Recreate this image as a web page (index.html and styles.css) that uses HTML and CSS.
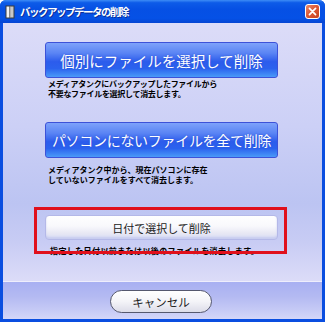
FILE: index.html
```html
<!DOCTYPE html>
<html lang="ja">
<head>
<meta charset="utf-8">
<link rel="stylesheet" href="styles.css">
</head>
<body>
<div class="window">
  <div class="titlebar">
    <svg class="ticon" width="10" height="14" viewBox="0 0 10 14">
      <rect x="0.5" y="0.5" width="9" height="13" fill="#3a3a3a"/>
      <rect x="1.5" y="1.5" width="3" height="11" fill="#f4f4f4"/>
      <rect x="5" y="1.5" width="3.5" height="11" fill="#c8c8c8"/>
      <rect x="4.5" y="1.5" width="0.8" height="11" fill="#777"/>
    </svg>
    <span class="title">バックアップデータの削除</span>
    <div class="close">
      <svg width="15" height="15" viewBox="0 0 15 15">
        <path d="M4 4 L11 11 M11 4 L4 11" stroke="#fff" stroke-width="2" stroke-linecap="round"/>
      </svg>
    </div>
  </div>
  <div class="client">
    <div class="main">
      <div class="bluebtn b1">個別にファイルを選択して削除</div>
      <p class="desc d1">メディアタンクにバックアップしたファイルから<br>不要なファイルを選択して消去します。</p>
      <div class="bluebtn b2">パソコンにないファイルを全て削除</div>
      <p class="desc d2">メディアタンク中から、現在パソコンに存在<br>していないファイルをすべて消去します。</p>
      <div class="third">
        <div class="whitebtn">日付で選択して削除</div>
        <p class="desc d3">指定した日付以前または以後のファイルを消去します。</p>
        <div class="highlight"></div>
      </div>
    </div>
    <div class="footer">
      <div class="cancel">キャンセル</div>
    </div>
  </div>
</div>
</body>
</html>
```

FILE: styles.css
```css
* { box-sizing: border-box; }
html, body { margin: 0; padding: 0; }
body {
  width: 325px;
  height: 322px;
  font-family: "Noto Sans CJK JP", "Noto Sans", sans-serif;
  background: #fff;
}
.window {
  width: 325px;
  height: 322px;
  display: flex;
  flex-direction: column;
  background: #0a4ee0;
  border-radius: 6px 6px 0 0;
  overflow: hidden;
}
.titlebar {
  height: 23px;
  flex: none;
  display: flex;
  align-items: center;
  padding: 0 5px 0 5px;
  background: linear-gradient(to bottom, #3d8cf6 0%, #0d5be8 12%, #0650e4 40%, #0551e6 80%, #0645d2 100%);
}
.ticon { flex: none; }
.title {
  margin-left: 5px;
  color: #fff;
  font-size: 10.5px;
  font-weight: bold;
  letter-spacing: -1.5px;
  flex: 1;
  text-shadow: 1px 1px 0 #0a2f9a;
}
.close {
  width: 15px;
  height: 15px;
  border: 1px solid #fff;
  border-radius: 3px;
  background: linear-gradient(135deg, #e98a6c 0%, #dd5a36 45%, #c6421f 100%);
  display: flex;
  align-items: center;
  justify-content: center;
}
.close svg { display: block; }
.client {
  flex: 1;
  display: flex;
  flex-direction: column;
  margin: 0 3px 3px 3px;
  background: #dcdcf6;
}
.main {
  flex: 1;
  padding: 19px 44px 0 42px;
  background: linear-gradient(to bottom, #dcdcf8 0%, #ccd0f6 40%, #bcc4f2 70%, #c8ccf4 85%, #dcdcf8 100%);
}
.bluebtn {
  height: 36px;
  border: 1px solid #3d52d8;
  border-radius: 3px;
  background: linear-gradient(to bottom, #7ea2fa 0%, #5a84f4 30%, #2c5cec 55%, #2b62ee 75%, #4a9af8 100%);
  color: #fff;
  font-size: 14.5px;
  display: flex;
  align-items: center;
  justify-content: center;
  text-shadow: 0 0 2px #2b4fd0;
  white-space: nowrap;
}
.b2 { font-size: 14px; letter-spacing: -0.3px; }
.desc {
  margin: 0;
  padding-left: 3px;
  font-size: 8px;
  font-weight: bold;
  line-height: 10px;
  color: #000;
  letter-spacing: -0.3px;
  white-space: nowrap;
}
.d1 { margin-top: 1px; margin-bottom: 23px; }
.d2 { margin-top: 7px; margin-bottom: 30px; letter-spacing: 0; }
.third { position: relative; }
.whitebtn {
  height: 25px;
  border: 1px solid #b4b8e8;
  border-radius: 4px;
  background: linear-gradient(to bottom, #ffffff 0%, #f8f8fc 45%, #e8e8f4 75%, #d8dcf4 100%);
  color: #222;
  font-size: 11px;
  display: flex;
  align-items: center;
  justify-content: center;
  box-shadow: inset 0 -2px 2px #c8ccf0;
}
.d3 { margin-top: 6px; padding-left: 5px; letter-spacing: 0.4px; }
.highlight {
  position: absolute;
  left: -11px;
  right: -9px;
  top: -8px;
  height: 47px;
  border: 3px solid #e0101c;
}
.footer {
  height: 38px;
  flex: none;
  padding-top: 8px;
  display: flex;
  justify-content: center;
  align-items: flex-start;
  background: linear-gradient(to bottom, #a8b0f2 0%, #b4baf2 40%, #c8ccf6 80%, #d4d6f8 100%);
  border-top: 1px solid #eeeefc;
}
.cancel {
  width: 102px;
  height: 23px;
  margin-right: 3px;
  border: 1px solid #55586e;
  border-radius: 12px;
  background: linear-gradient(to bottom, #ffffff 0%, #f4f4f8 50%, #dcdce8 100%);
  color: #222;
  font-size: 11.5px;
  display: flex;
  align-items: center;
  justify-content: center;
}
```
